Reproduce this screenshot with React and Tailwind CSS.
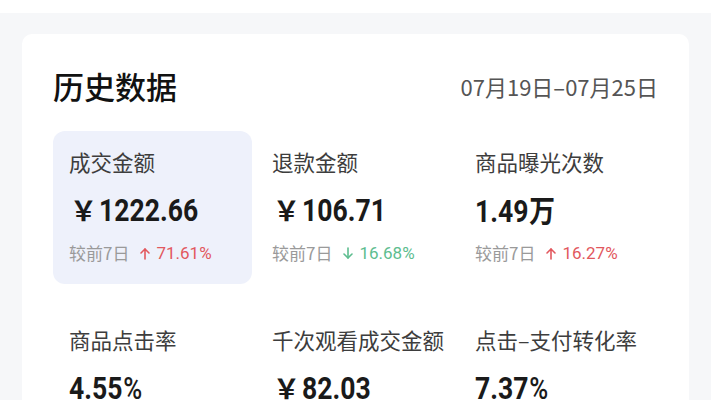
import { useState } from 'react'

const cjk = "font-['Noto_Sans_CJK_SC','Noto_Sans',sans-serif]"
const num = "font-['Roboto','Noto_Sans_CJK_SC',sans-serif]"

const stats = [
  { label: '成交金额', value: '¥1222.66', dir: 'up', change: '71.61%' },
  { label: '退款金额', value: '¥106.71', dir: 'down', change: '16.68%' },
  { label: '商品曝光次数', value: '1.49万', dir: 'up', change: '16.27%' },
  { label: '商品点击率', value: '4.55%' },
  { label: '千次观看成交金额', value: '¥82.03' },
  { label: '点击–支付转化率', value: '7.37%' },
]

function Arrow({ dir }) {
  return (
    <svg width="12" height="13" viewBox="0 0 12 13" fill="none" stroke="currentColor" strokeWidth="1.6" strokeLinecap="round" strokeLinejoin="round">
      {dir === 'up' ? (
        <>
          <path d="M6 12V2" />
          <path d="M2 6l4-4 4 4" />
        </>
      ) : (
        <>
          <path d="M6 1v10" />
          <path d="M2 7l4 4 4-4" />
        </>
      )}
    </svg>
  )
}

function Value({ text }) {
  // split yen / 万 / % so each gets its own glyph style
  const yen = text.startsWith('¥')
  let body = yen ? text.slice(1) : text
  const wan = body.endsWith('万')
  const pct = body.endsWith('%')
  if (wan || pct) body = body.slice(0, -1)
  return (
    <div className="flex items-baseline text-[#1a1a1a] leading-none">
      {yen && <span className={`${cjk} font-bold text-[27px] mr-[2px] ml-[1px]`}>￥</span>}
      <div className="flex items-baseline origin-left scale-x-[0.83]">
        <span className={`${num} font-bold text-[32px]`}>{body}</span>
        {wan && <span className={`${cjk} font-bold text-[31px] ml-[1px]`}>万</span>}
        {pct && <span className={`${num} font-medium text-[31px] ml-[1px]`}>%</span>}
      </div>
    </div>
  )
}

function Tile({ s, active }) {
  return (
    <div className={`rounded-[12px] px-4 pt-[17px] pb-[20px] ${active ? 'bg-[#eef1fb]' : ''}`}>
      <div className={`${cjk} text-[21.5px] leading-[28px] text-[#3d3d3d] whitespace-nowrap`}>{s.label}</div>
      <div className="mt-[20px] h-[28px] flex items-center">
        <Value text={s.value} />
      </div>
      {s.change && (
        <div className="mt-[18px] flex items-center text-[17px] leading-[22px]">
          <span className={`${cjk} text-[#9a9a9a]`}>较前7日</span>
          <span className={`ml-[10px] flex items-center gap-[5px] ${s.dir === 'up' ? 'text-[#e2585e]' : 'text-[#5dbd8f]'}`}>
            <Arrow dir={s.dir} />
            <span className="font-['Roboto',sans-serif]">{s.change}</span>
          </span>
        </div>
      )}
    </div>
  )
}

export default function App() {
  const [active] = useState(0)
  return (
    <div className="w-[711px] h-[400px] overflow-hidden bg-white">
      <div className="mt-[13px] h-full bg-[#f6f7f9] pl-[22px] pr-[22px] pt-[21px]">
        <div className="bg-white rounded-[10px] px-[31px] pt-[32px] pb-6">
          <div className="flex items-center justify-between">
            <h2 className={`${cjk} text-[31px] font-medium text-[#111] leading-[40px]`}>历史数据</h2>
            <span className={`${cjk} text-[22px] text-[#555]`}>07月19日–07月25日</span>
          </div>
          <div className="mt-[25px] grid grid-cols-3 gap-x-[4px] gap-y-[25px]">
            {stats.map((s, i) => (
              <Tile key={s.label} s={s} active={i === active} />
            ))}
          </div>
        </div>
      </div>
    </div>
  )
}
